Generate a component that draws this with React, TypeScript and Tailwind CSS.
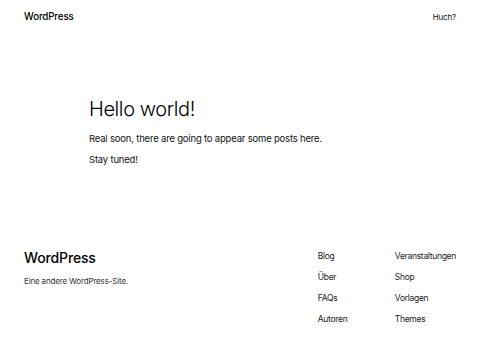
const footerLinks = [
  ["Blog", "Über", "FAQs", "Autoren"],
  ["Veranstaltungen", "Shop", "Vorlagen", "Themes"],
];

export default function App() {
  return (
    <div className="flex min-h-[360px] w-[480px] flex-col bg-white font-['Inter',sans-serif] text-black">
      {/* Header */}
      <header className="flex items-center justify-between px-6 pt-[9px]">
        <span className="text-[9.7px] font-medium leading-[16px] tracking-[-0.01em]">WordPress</span>
        <span className="text-[8px] leading-[16px] text-[#111] tracking-[-0.02em]">Huch?</span>
      </header>

      {/* Main */}
      <main className="pl-[89px] pt-[72px]">
        <h1 className="text-[20px] font-light leading-[25px] tracking-[-0.02em]">Hello world!</h1>
        <p className="mt-[10px] text-[9.5px] leading-[14px] tracking-[-0.02em] text-[#111]">
          Real soon, there are going to appear some posts here.
        </p>
        <p className="mt-[7px] text-[9.5px] leading-[14px] tracking-[-0.02em] text-[#111]">Stay tuned!</p>
      </main>

      {/* Footer */}
      <footer className="flex items-start justify-between px-6 pt-[81px]">
        <div>
          <div className="text-[14px] font-medium leading-[20px] tracking-[-0.01em]">WordPress</div>
          <div className="mt-[7px] text-[8px] leading-[12px] text-[#333] tracking-[-0.02em]">Eine andere WordPress-Site.</div>
        </div>
        <div className="mt-[2px] flex gap-[30px]">
          {footerLinks.map((col, i) => (
            <ul key={i} className={`flex flex-col gap-[9px] ${i === 0 ? "w-[47px]" : ""}`}>
              {col.map((l) => (
                <li key={l} className="text-[8.5px] leading-[12px] text-[#222] tracking-[-0.035em]">{l}</li>
              ))}
            </ul>
          ))}
        </div>
      </footer>
    </div>
  );
}
